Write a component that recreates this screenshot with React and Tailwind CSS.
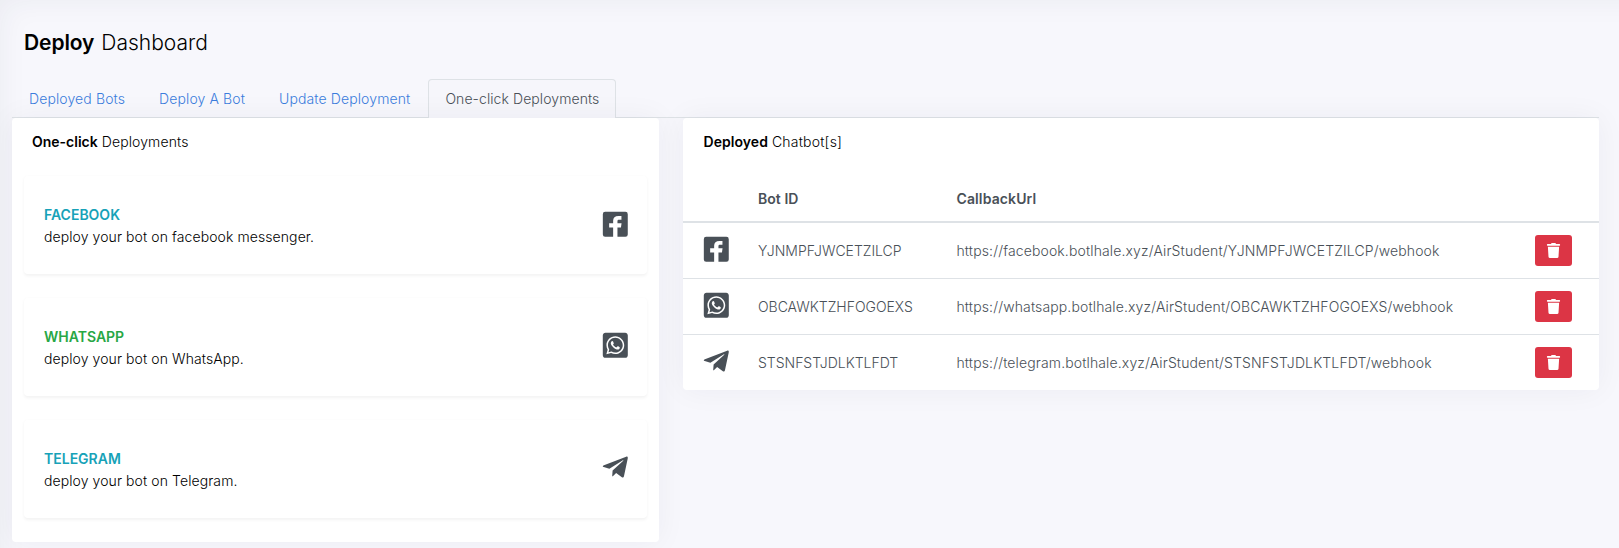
import { FaWhatsappSquare, FaTelegramPlane, FaTrash } from "react-icons/fa";

function FacebookSquare({ className }) {
  return (
    <svg viewBox="-5.5 -5.5 86 86" className={className} fill="currentColor">
      <path d="M7 0H68a7 7 0 0 1 7 7V68a7 7 0 0 1-7 7H44V47.5H54.5L56.3 34.5H44V27.5C44 24.5 45.8 23.6 49 23.6H56V12.3H47C36.5 12.3 31 18 31 27V34.5H19V47.5H31V75H7a7 7 0 0 1-7-7V7a7 7 0 0 1 7-7Z" />
    </svg>
  );
}

const tabs = ["Deployed Bots", "Deploy A Bot", "Update Deployment", "One-click Deployments"];

const channels = [
  {
    name: "FACEBOOK",
    color: "text-[#17a2b8]",
    text: "deploy your bot on facebook messenger.",
    Icon: FacebookSquare,
    shift: "mb-px",
  },
  {
    name: "WHATSAPP",
    color: "text-[#28a745]",
    text: "deploy your bot on WhatsApp.",
    Icon: FaWhatsappSquare,
    shift: "mb-[3px]",
  },
  {
    name: "TELEGRAM",
    color: "text-[#17a2b8]",
    text: "deploy your bot on Telegram.",
    Icon: FaTelegramPlane,
    shift: "mb-[3px]",
  },
];

const bots = [
  {
    id: "YJNMPFJWCETZILCP",
    url: "https://facebook.botlhale.xyz/AirStudent/YJNMPFJWCETZILCP/webhook",
    Icon: FacebookSquare,
  },
  {
    id: "OBCAWKTZHFOGOEXS",
    url: "https://whatsapp.botlhale.xyz/AirStudent/OBCAWKTZHFOGOEXS/webhook",
    Icon: FaWhatsappSquare,
  },
  {
    id: "STSNFSTJDLKTLFDT",
    url: "https://telegram.botlhale.xyz/AirStudent/STSNFSTJDLKTLFDT/webhook",
    Icon: FaTelegramPlane,
  },
];

function ServiceIcon({ Icon }) {
  return (
    <span className="flex w-[25px] shrink-0 justify-center pl-px">
      <Icon className="size-[28.6px] shrink-0 text-[#495057]" />
    </span>
  );
}

function Tab({ label, active }) {
  return (
    <button
      className={
        active
          ? "-mb-px ml-px h-[39px] rounded-t border border-b-0 border-[#dee2e6] bg-[#f6f6fb] px-4 pb-[2px] tracking-[0.08px] text-[#495057]"
          : "h-[38px] border border-transparent px-4 text-[#3b7ddd]"
      }
    >
      {label}
    </button>
  );
}

export default function App() {
  return (
    <div className="h-[548px] w-full overflow-hidden bg-[#f7f7fc] pr-5 pl-3 font-['Inter',sans-serif] text-sm leading-[21px] font-light tracking-[0.115px] text-black shadow-[inset_22px_22px_30px_-22px_rgba(41,48,66,0.06)]">
      <h1 className="flex h-[79px] gap-[7px] pt-[27px] pl-3 text-[21px] leading-8 tracking-normal">
        <strong className="font-semibold tracking-[-0.1px]">Deploy</strong>
        <span>Dashboard</span>
      </h1>

      <nav className="flex h-[39px] items-start border-b border-[#dee2e6]">
        {tabs.map((label, i) => (
          <Tab key={label} label={label} active={i === 3} />
        ))}
      </nav>

      <main className="flex items-start gap-6">
        <section className="h-[424px] w-[647px] shrink-0 rounded bg-white px-3 shadow-[0_0_30px_0_rgba(41,48,66,0.05)]">
          <h2 className="flex h-[58px] gap-1 pt-[13px] pl-2">
            <strong className="font-semibold tracking-normal">One-click</strong>
            <span>Deployments</span>
          </h2>
          <div className="flex flex-col gap-6">
            {channels.map(({ name, color, text, Icon, shift }) => (
              <article
                key={name}
                className="flex h-[98px] items-center justify-between rounded bg-white px-5 shadow-[0_1.6px_3.2px_rgba(0,0,0,0.05)]"
              >
                <div className="pt-[2px] leading-[22px]">
                  <h3 className={`font-semibold tracking-normal ${color}`}>{name}</h3>
                  <p className="tracking-[0.09px]">{text}</p>
                </div>
                <div className={shift}>
                  <ServiceIcon Icon={Icon} />
                </div>
              </article>
            ))}
          </div>
        </section>

        <section className="h-[272px] flex-1 rounded bg-white shadow-[0_0_30px_0_rgba(41,48,66,0.05)]">
          <h2 className="flex h-[58px] gap-1 pt-[13px] pl-[20.5px]">
            <strong className="font-semibold tracking-[0.05px]">Deployed</strong>
            <span className="tracking-[0.2px]">Chatbot[s]</span>
          </h2>
          <div className="text-[#495057]">
            <div className="flex h-[47px] items-center border-b-2 border-[#dee2e6] pl-[75px] font-semibold">
              <span className="w-[198.5px] tracking-[0.05px]">Bot ID</span>
              <span>CallbackUrl</span>
            </div>
            {bots.map(({ id, url, Icon }) => (
              <div
                key={id}
                className="flex h-14 items-center border-b border-[#dee2e6] pr-[27px] pl-5 last:h-[55px] last:border-b-0"
              >
                <div className="mr-[30px] mb-[2px]">
                  <ServiceIcon Icon={Icon} />
                </div>
                <span className="w-[198.5px] tracking-[-0.02px]">{id}</span>
                <span className="flex-1 tracking-[0.13px]">{url}</span>
                <button
                  aria-label="Delete"
                  className="flex h-[31px] w-[37px] items-center justify-center rounded-[3px] bg-[#dc3545] text-white"
                >
                  <FaTrash className="size-[15px]" />
                </button>
              </div>
            ))}
          </div>
        </section>
      </main>
    </div>
  );
}
